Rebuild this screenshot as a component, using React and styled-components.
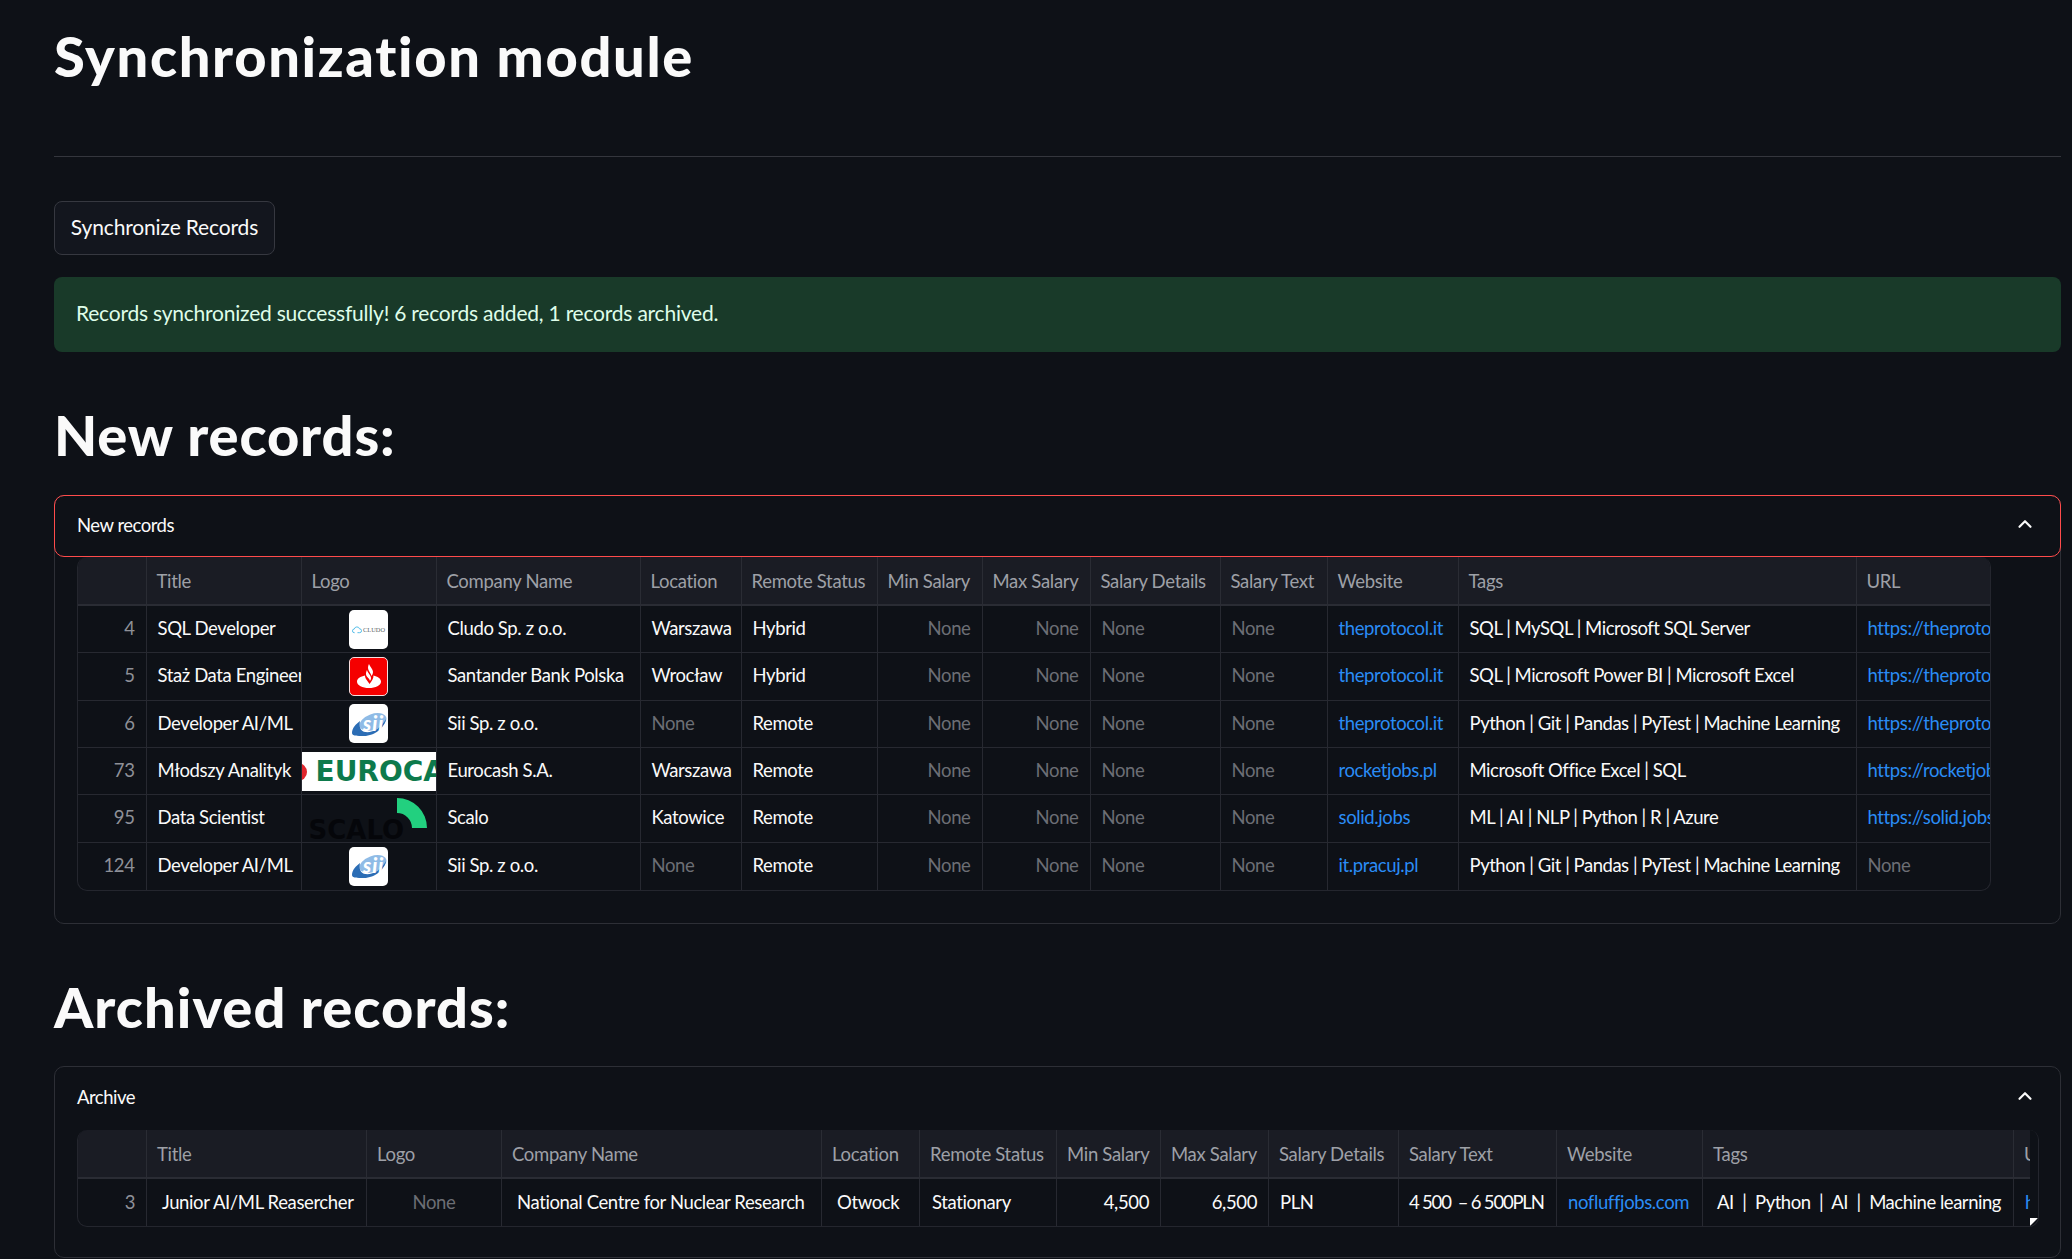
import styled, { createGlobalStyle } from "styled-components";
import { ChevronUp } from "lucide-react";

const GlobalStyle = createGlobalStyle`
  html, body {
    margin: 0;
    height: 1259px;
    overflow: hidden;
    background: #0e1117;
    color: #fafafa;
    font-family: "Lato", "Liberation Sans", sans-serif;
  }
  * { box-sizing: border-box; }
`;

const Page = styled.main`
  display: flex;
  flex-direction: column;
  width: 2072px;
  height: 1259px;
  overflow: hidden;
  padding: 0 11px 0 54px;
`;

const Heading = styled.h1`
  margin: ${(p) => p.$margin};
  font-size: 56px;
  line-height: 70px;
  font-weight: 900;
  letter-spacing: ${(p) => p.$track}px;
  color: #fafafa;
`;

const Divider = styled.hr`
  width: 100%;
  height: 1px;
  margin: 65px 0 44px;
  border: none;
  background: #34363d;
`;

const SyncButton = styled.button`
  align-self: flex-start;
  width: 221px;
  height: 54px;
  margin-bottom: 22px;
  padding: 0 0 3px;
  border: 1px solid #363840;
  border-radius: 8px;
  background: #13161e;
  color: #fafafa;
  font: 400 21px "Lato", sans-serif;
  letter-spacing: -0.15px;
`;

const Alert = styled.div`
  display: flex;
  align-items: center;
  height: 75px;
  padding: 0 0 4px 22px;
  border-radius: 8px;
  background: #193a29;
  color: #dffde9;
  font-size: 21px;
  letter-spacing: -0.22px;
`;

const Expander = styled.section`
  display: flex;
  flex-direction: column;
  height: ${(p) => p.$height}px;
  border: 1px solid #2d2f36;
  border-radius: 10px;
`;

const ExpanderHeader = styled.header`
  display: flex;
  align-items: center;
  justify-content: space-between;
  flex: none;
  height: ${(p) => p.$height}px;
  margin: -1px -1px 0;
  padding: 0 24px 2px 22px;
  border: 1px solid ${(p) => (p.$active ? "#ff4b4b" : "transparent")};
  border-radius: 10px;
  font-size: 18.5px;
  letter-spacing: -0.5px;

  svg {
    margin-top: -2px;
    color: #fafafa;
  }
`;

const TableFrame = styled.div`
  position: relative;
  width: ${(p) => p.$width}px;
  margin-left: 22px;
  border: 1px solid #24262e;
  border-top: none;
  border-radius: 10px;
  overflow: hidden;
`;

const Row = styled.div`
  display: grid;
  grid-template-columns: ${(p) => p.$columns};
  height: ${(p) => p.$height}px;
  width: ${(p) => p.$clip || "auto"};
  background: ${(p) => (p.$head ? "#1a1c24" : "transparent")};
  border-bottom: ${(p) => (p.$last ? "none" : p.$head ? "2px solid #2a2c34" : "1px solid #272931")};
  overflow: hidden;
`;

const HeadCell = styled.div`
  display: flex;
  align-items: center;
  padding-left: 10px;
  border-right: 1px solid #2a2c34;
  color: #9ea0a7;
  font-size: 18.5px;
  letter-spacing: -0.3px;
  white-space: nowrap;
  overflow: hidden;
`;

const Cell = styled.div`
  display: flex;
  align-items: center;
  justify-content: ${(p) => (p.$right ? "flex-end" : p.$center ? "center" : "flex-start")};
  padding: ${(p) => (p.$right ? "0 11px 2px 0" : `0 0 2px ${p.$pad ?? 11}px`)};
  border-right: 1px solid #272931;
  color: ${(p) => (p.$none ? "#6c6e75" : p.$dim ? "#8e9097" : p.$link ? "#2a8cf5" : "#fafafa")};
  font-size: 18.5px;
  letter-spacing: ${(p) => (p.$digits ? "-1.2px" : p.$tags ? "-0.47px" : "-0.38px")};
  white-space: pre;
  overflow: hidden;
`;

const LogoCell = styled.div`
  display: flex;
  align-items: center;
  justify-content: center;
  border-right: 1px solid #272931;
  overflow: hidden;
`;

const Tile = styled.div`
  display: flex;
  align-items: center;
  justify-content: center;
  width: 39px;
  height: 39px;
  border: ${(p) => (p.$framed ? "1px solid #f6dede" : "none")};
  border-radius: 5px;
  background: ${(p) => p.$bg || "#fff"};
  overflow: hidden;
`;

const CludoMark = styled.span`
  display: flex;
  align-items: center;
  gap: 1px;
  color: #5a5f66;
  font: 400 6.4px "Liberation Serif", serif;
`;

const EuroBanner = styled.div`
  position: relative;
  display: flex;
  align-items: center;
  width: 100%;
  height: 39px;
  padding-left: 14px;
  background: #fff;
  color: #0d7a4c;
  font: 700 28px "DejaVu Sans", sans-serif;
  overflow: hidden;

  &::before {
    content: "";
    position: absolute;
    left: -13px;
    top: 11px;
    width: 18px;
    height: 18px;
    border-radius: 50%;
    background: #e0252c;
  }
`;

const ScaloMark = styled.div`
  position: relative;
  width: 100%;
  height: 100%;

  span {
    position: absolute;
    left: 7px;
    bottom: -1px;
    color: #05060a;
    font: 700 26px/1 "DejaVu Sans", sans-serif;
  }

  svg {
    position: absolute;
    left: 95px;
    top: 3px;
  }
`;

const ScrollStrip = styled.div`
  position: absolute;
  top: 0;
  right: 0;
  bottom: 0;
  width: 8px;
  background: #0e1117;

  &::after {
    content: "";
    position: absolute;
    right: 0;
    bottom: 0;
    border-style: solid;
    border-width: 8px 8px 0 0;
    border-color: #fff transparent transparent transparent;
  }
`;

function CludoLogo() {
  return (
    <Tile>
      <CludoMark>
        <svg width="10" height="9" viewBox="0 0 11 9" fill="none" stroke="#55bde8" strokeWidth="1.1">
          <path d="M3 8 H2.5 A2 2 0 0 1 2.5 4 A3 3 0 0 1 8.3 3.8 A2 2 0 0 1 8.5 8 H6" />
        </svg>
        CLUDO
      </CludoMark>
    </Tile>
  );
}

function SantanderLogo() {
  return (
    <Tile $bg="#f50000" $framed>
      <svg width="24" height="24" viewBox="0 0 24 24" fill="#fff">
        <path d="M12 0 C13 3 16 5 16 8 C16 10 15 11 14.5 12 C14 9 11 7 11 4 C11 2.5 11.5 1 12 0 Z" />
        <path d="M10 6 C10.5 9 14 11 14 14 C14 15.5 13.5 16 13 17 C12.5 14 9 13 9 10 C9 8 9.5 7 10 6 Z" />
        <path d="M8 11.5 C3.5 12.5 0 14.5 0 17.5 C0 21.5 5.5 24 12 24 C18.5 24 24 21.5 24 17.5 C24 14.5 20.5 12.5 16.5 11.5 C16.5 15 14.5 17 12.5 20 C11 17 8 15 8 11.5 Z" />
      </svg>
    </Tile>
  );
}

function SiiLogo() {
  return (
    <Tile>
      <svg width="36" height="26" viewBox="0 0 36 26">
        <ellipse cx="22" cy="11" rx="14" ry="8" transform="rotate(-20 22 11)" fill="#8fbbe6" />
        <path d="M1 22 C1 17 5 13 9 10 C8 15 9 20 14 21 C22 22 30 17 35 8 C34 16 24 25 13 25 C6 25 1 25 1 22 Z" fill="#2b6db5" />
        <text x="12" y="20" fill="#fff" fontFamily="Lato, sans-serif" fontStyle="italic" fontWeight="900" fontSize="20" letterSpacing="1">sii</text>
      </svg>
    </Tile>
  );
}

function EurocashLogo() {
  return <EuroBanner>EUROCASH</EuroBanner>;
}

function ScaloLogo() {
  return (
    <ScaloMark>
      <span>SCALO</span>
      <svg width="31" height="31" viewBox="0 0 31 31">
        <path d="M0 0 A30 30 0 0 1 30 30 H15 A15 15 0 0 0 0 15 Z" fill="#22d07f" />
      </svg>
    </ScaloMark>
  );
}

const HEAD = ["", "Title", "Logo", "Company Name", "Location", "Remote Status", "Min Salary", "Max Salary", "Salary Details", "Salary Text", "Website", "Tags", "URL"];
const NEW_COLUMNS = "68.5px 155px 135px 204px 101px 136px 105px 108px 130px 107px 131px 398px 135.5px";
const ARCHIVE_COLUMNS = "69px 220px 135px 320px 98px 137px 104px 108px 130px 158px 146px 311px 100px";

const NEW_ROWS = [
  { id: 4, title: "SQL Developer", logo: <CludoLogo />, company: "Cludo Sp. z o.o.", location: "Warszawa", remote: "Hybrid", site: "theprotocol.it", tags: "SQL | MySQL | Microsoft SQL Server", url: "https://theprotocol.it/szczegoly" },
  { id: 5, title: "Staż Data Engineer", logo: <SantanderLogo />, company: "Santander Bank Polska", location: "Wrocław", remote: "Hybrid", site: "theprotocol.it", tags: "SQL | Microsoft Power BI | Microsoft Excel", url: "https://theprotocol.it/szczegoly" },
  { id: 6, title: "Developer AI/ML", logo: <SiiLogo />, company: "Sii Sp. z o.o.", location: null, remote: "Remote", site: "theprotocol.it", tags: "Python | Git | Pandas | PyTest | Machine Learning", url: "https://theprotocol.it/szczegoly" },
  { id: 73, title: "Młodszy Analityk", logo: <EurocashLogo />, company: "Eurocash S.A.", location: "Warszawa", remote: "Remote", site: "rocketjobs.pl", tags: "Microsoft Office Excel | SQL", url: "https://rocketjobs.pl/oferta" },
  { id: 95, title: "Data Scientist", logo: <ScaloLogo />, company: "Scalo", location: "Katowice", remote: "Remote", site: "solid.jobs", tags: "ML | AI | NLP | Python | R | Azure", url: "https://solid.jobs/offer" },
  { id: 124, title: "Developer AI/ML", logo: <SiiLogo />, company: "Sii Sp. z o.o.", location: null, remote: "Remote", site: "it.pracuj.pl", tags: "Python | Git | Pandas | PyTest | Machine Learning", url: null },
];

export default function App() {
  return (
    <Page>
      <GlobalStyle />
      <Heading $margin="21px 0 0" $track={1.65}>Synchronization module</Heading>
      <Divider />
      <SyncButton>Synchronize Records</SyncButton>
      <Alert>Records synchronized successfully! 6 records added, 1 records archived.</Alert>

      <Heading $margin="48px 0 25px" $track={0.9}>New records:</Heading>
      <Expander $height={429}>
        <ExpanderHeader $active $height={62}>
          New records
          <ChevronUp size={22} strokeWidth={2.4} />
        </ExpanderHeader>
        <TableFrame $width={1914}>
          <Row $head $columns={NEW_COLUMNS} $height={49}>
            {HEAD.map((h, i) => <HeadCell key={i}>{h}</HeadCell>)}
          </Row>
          {NEW_ROWS.map((r, i) => (
            <Row key={r.id} $columns={NEW_COLUMNS} $height={47.33} $last={i === NEW_ROWS.length - 1}>
              <Cell $right $dim>{r.id}</Cell>
              <Cell>{r.title}</Cell>
              <LogoCell>{r.logo}</LogoCell>
              <Cell>{r.company}</Cell>
              <Cell $none={!r.location}>{r.location || "None"}</Cell>
              <Cell>{r.remote}</Cell>
              <Cell $right $none>None</Cell>
              <Cell $right $none>None</Cell>
              <Cell $none>None</Cell>
              <Cell $none>None</Cell>
              <Cell $link>{r.site}</Cell>
              <Cell $tags>{r.tags}</Cell>
              <Cell $link={!!r.url} $none={!r.url}>{r.url || "None"}</Cell>
            </Row>
          ))}
        </TableFrame>
      </Expander>

      <Heading $margin="48px 0 24px" $track={1.05}>Archived records:</Heading>
      <Expander $height={192}>
        <ExpanderHeader $height={64}>
          Archive
          <ChevronUp size={22} strokeWidth={2.4} />
        </ExpanderHeader>
        <TableFrame $width={1962}>
          <Row $head $columns={ARCHIVE_COLUMNS} $height={49} $clip="2000px">
            {HEAD.map((h, i) => <HeadCell key={i}>{h}</HeadCell>)}
          </Row>
          <Row $columns={ARCHIVE_COLUMNS} $height={47} $clip="2000px" $last>
            <Cell $right $dim>3</Cell>
            <Cell $pad={15}>Junior AI/ML Reasercher</Cell>
            <Cell $center $pad={0} $none>None</Cell>
            <Cell $pad={15}>National Centre for Nuclear Research</Cell>
            <Cell $pad={15}>Otwock</Cell>
            <Cell $pad={12}>Stationary</Cell>
            <Cell $right>4,500</Cell>
            <Cell $right>6,500</Cell>
            <Cell>PLN</Cell>
            <Cell $pad={10} $digits>{"4 500  – 6 500PLN"}</Cell>
            <Cell $link>nofluffjobs.com</Cell>
            <Cell $pad={14} $tags>{"AI  |  Python  |  AI  |  Machine learning"}</Cell>
            <Cell $link>https://nofluffjobs.com</Cell>
          </Row>
          <ScrollStrip />
        </TableFrame>
      </Expander>
    </Page>
  );
}
